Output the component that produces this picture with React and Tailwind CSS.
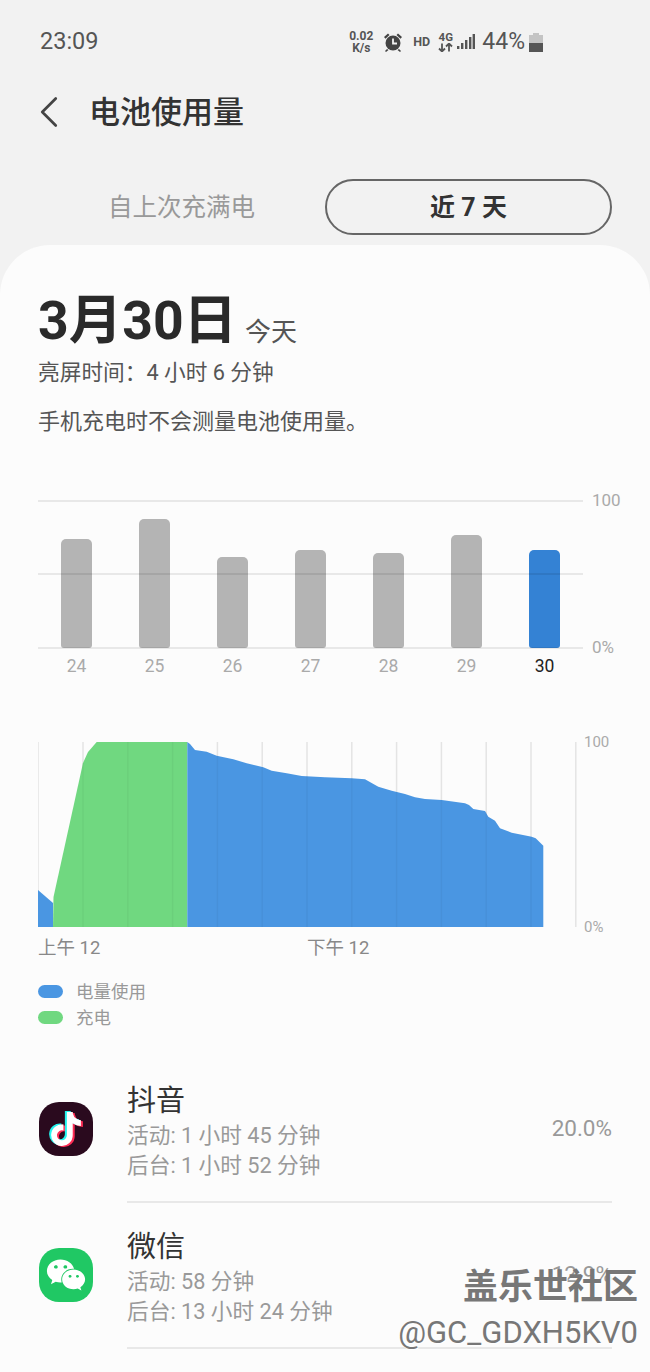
import { ChevronLeft } from "lucide-react";
import { FaTiktok, FaWeixin } from "react-icons/fa6";

const font = { fontFamily: '"Roboto", "Noto Sans CJK SC", sans-serif' };

const bars = [
  { day: 24, height: 109 },
  { day: 25, height: 129 },
  { day: 26, height: 91 },
  { day: 27, height: 98 },
  { day: 28, height: 95 },
  { day: 29, height: 113 },
  { day: 30, height: 98, active: true },
];

const gridX = [38, 83, 127.8, 172.6, 217.4, 262.2, 307, 351.8, 396.6, 441.4, 486.2, 531, 575.8];

// faint hour lines that show through the filled area, with the y where the fill starts
const areaLines = [
  [83, 763],
  [127.8, 742],
  [172.6, 742],
  [217.4, 756],
  [262.2, 767],
  [307, 776],
  [351.8, 778],
  [396.6, 792],
  [441.4, 800],
  [486.2, 812],
  [531, 837],
];

const blueArea =
  "187.3,742 190,744 195,750 206.7,751.7 216.7,755.7 233.3,759.3 246.7,763.3 263.3,767.3 271.7,770.7 286.7,773.3 301.7,776 325,777.3 351.7,778.3 365,779.3 378.3,786.7 391.7,790.7 405,794 415,797.3 425,799 441.7,800 465,803.3 469,805 473.3,809 485,811 488.3,816.7 495,820.7 500,828.3 511.7,832.7 531.7,836.7 535.7,838.3 543.3,845.7 543.3,927 187.3,927";

function StatusBar() {
  return (
    <div className="flex h-[82px] items-center justify-between pl-10 pr-[107px] pt-[2px] text-[#555]">
      <span className="text-[23.5px]">23:09</span>
      <div className="flex items-center">
        <div className="flex w-[24px] flex-col items-center text-[12px] font-bold leading-[12px]">
          <span>0.02</span>
          <span>K/s</span>
        </div>
        <svg className="ml-[10px]" width="20" height="20" viewBox="0 0 20 20" fill="#444">
          <circle cx="10" cy="11" r="7.5" />
          <path d="M1 5 5 1.5 6.5 3 2.5 6.8ZM19 5 15 1.5 13.5 3 17.5 6.8ZM4 17l-2 2 1 1 2.5-2ZM16 17l2 2-1 1-2.5-2Z" />
          <path d="M10 6.5V11.5H14" fill="none" stroke="#f2f2f2" strokeWidth="1.8" />
        </svg>
        <span className="ml-[10px] w-[16px] text-[12.5px] font-bold">HD</span>
        <div className="ml-[9px] flex w-[15px] flex-col items-center">
          <span className="text-[11.5px] font-bold leading-[11px]">4G</span>
          <svg width="15" height="9" viewBox="0 0 15 9" fill="none" stroke="#555" strokeWidth="1.8">
            <path d="M4 0.5V8M1 5.5 4 8.5 7 5.5M11 8.5V1M8 3.5 11 0.5 14 3.5" />
          </svg>
        </div>
        <svg className="ml-[4px]" width="18" height="18" viewBox="0 0 18 18" fill="#555">
          <rect x="0" y="13" width="2.4" height="3" />
          <rect x="4" y="10" width="2.4" height="6" />
          <rect x="8" y="7" width="2.4" height="9" />
          <rect x="12" y="4" width="2.4" height="12" />
          <rect x="15.6" y="1" width="2.4" height="15" />
        </svg>
        <span className="ml-[7px] text-[23px]">44%</span>
        <svg className="ml-[4px]" width="14" height="20" viewBox="0 0 14 20">
          <path d="M4 1h6v2h4v17H0V3h4Z" fill="#c4c4c4" />
          <rect x="0" y="11" width="14" height="9" fill="#555" />
        </svg>
      </div>
    </div>
  );
}

function BarChart() {
  return (
    <div className="mt-[63px]">
      <div className="relative h-[148px]">
        <div className="flex h-full items-end pl-[23px]">
          {bars.map((bar) => (
            <div key={bar.day} className="w-[78px]">
              <div
                className={`w-[31px] rounded-t-[5px] rounded-b-[3px] ${bar.active ? "bg-[#3482d4]" : "bg-[#b4b4b4]"}`}
                style={{ height: bar.height }}
              />
            </div>
          ))}
        </div>
        <div className="absolute inset-0 flex flex-col justify-between">
          <div className="flex h-px items-center">
            <div className="h-[2px] w-[545px] shrink-0 bg-black/[0.08]" />
            <span className="ml-[9px] whitespace-nowrap text-[17px] text-[#aaa]">100</span>
          </div>
          <div className="h-[2px] w-[545px] bg-black/[0.08]" />
          <div className="flex h-px items-center">
            <div className="h-[2px] w-[545px] shrink-0 bg-black/[0.08]" />
            <span className="ml-[9px] whitespace-nowrap text-[17px] text-[#aaa]">0%</span>
          </div>
        </div>
      </div>
      <div className="mt-[6px] flex pl-[23px]">
        {bars.map((bar) => (
          <div
            key={bar.day}
            className={`w-[78px] text-[17.5px] leading-[24px] ${bar.active ? "text-[#222]" : "text-[#aaa]"}`}
          >
            <span className="block w-[31px] text-center">{bar.day}</span>
          </div>
        ))}
      </div>
    </div>
  );
}

function AreaChart() {
  return (
    <div className="mt-[64px]">
      <div className="flex h-[185px]">
        <svg width="540" height="186" viewBox="38 742 540 186" className="shrink-0">
          {gridX.map((x) => (
            <line key={x} x1={x} x2={x} y1="742" y2="927" stroke="#e4e4e4" strokeWidth="1.5" />
          ))}
          <polygon points="38,890 53,903 53,927 38,927" fill="#4a96e2" />
          <polygon points="53,927 53.5,897 83,763 88,752 96.7,742 187.3,742 187.3,927" fill="#70d880" />
          <polygon points={blueArea} fill="#4a96e2" />
          {areaLines.map(([x, top]) => (
            <line
              key={x}
              x1={x}
              x2={x}
              y1={top}
              y2="927"
              stroke="#000"
              strokeOpacity="0.04"
              strokeWidth="1.5"
            />
          ))}
        </svg>
        <div className="ml-[6px] flex flex-col justify-between text-[15px] leading-none text-[#aaa]">
          <span className="-mt-[7px]">100</span>
          <span className="-mb-[8px]">0%</span>
        </div>
      </div>
      <div className="mt-[8px] flex text-[18.5px] text-[#888]">
        <span className="w-[269px]">上午 12</span>
        <span>下午 12</span>
      </div>
      <div className="mt-[17px] flex flex-col gap-[2px] text-[17.5px] text-[#999]">
        <div className="flex h-[24px] items-center">
          <span className="h-[13px] w-[25px] rounded-full bg-[#4a96e2]" />
          <span className="ml-[13px]">电量使用</span>
        </div>
        <div className="flex h-[24px] items-center">
          <span className="h-[13px] w-[25px] rounded-full bg-[#70d880]" />
          <span className="ml-[13px]">充电</span>
        </div>
      </div>
    </div>
  );
}

function AppRow({ icon, name, active, background, percent }) {
  return (
    <div className="flex h-[146px]">
      <div className="flex w-[89px] items-center pb-[2px] pl-px">{icon}</div>
      <div className="flex flex-1 items-center justify-between border-b-2 border-[#e8e8e8]">
        <div className="flex flex-col pt-[4px]">
          <span className="text-[29px] leading-[40px] text-[#333]">{name}</span>
          <span className="text-[21.7px] leading-[30px] text-[#999]">{active}</span>
          <span className="text-[21.7px] leading-[30px] text-[#999]">{background}</span>
        </div>
        <span className="text-[22.5px] text-[#999]">{percent}</span>
      </div>
    </div>
  );
}

export default function App() {
  return (
    <div className="relative h-[1372px] overflow-hidden bg-[#f2f2f2]" style={font}>
      <StatusBar />
      <div className="flex h-[60px] items-center pl-[22px]">
        <ChevronLeft className="h-[54px] w-[54px] text-[#444]" strokeWidth={1.2} />
        <h1 className="ml-[13px] pt-[3px] text-[31px] font-medium text-[#333]">电池使用量</h1>
      </div>
      <div className="mt-[37px] flex h-[56px] items-center px-[38px]">
        <span className="w-[287px] pl-[70px] pt-[3px] text-[24.5px] text-[#999]">自上次充满电</span>
        <div className="flex h-[56px] w-[287px] items-center justify-center rounded-full border-2 border-[#666] pt-px text-[25px] font-bold text-[#333]">
          近 7 天
        </div>
      </div>
      <main className="mt-[10px] h-[1200px] rounded-t-[50px] bg-[#fcfcfc] px-[38px] pt-[40px]">
        <div className="flex items-end">
          <span className="text-[53.5px] font-bold leading-[72px] text-[#2a2a2a]">3月30日</span>
          <span className="mb-[5px] ml-[8px] text-[26px] text-[#555]">今天</span>
        </div>
        <p className="mt-[1px] text-[21.7px] leading-[30px] text-[#555]">亮屏时间：4 小时 6 分钟</p>
        <p className="mt-[19px] text-[22px] leading-[30px] text-[#555]">手机充电时不会测量电池使用量。</p>
        <BarChart />
        <AreaChart />
        <div className="mt-[27px]">
          <AppRow
            name="抖音"
            active="活动: 1 小时 45 分钟"
            background="后台: 1 小时 52 分钟"
            percent="20.0%"
            icon={
              <div className="flex h-[54px] w-[54px] items-center justify-center rounded-[20px] bg-[#2a0a1e] text-[34px] text-white">
                <FaTiktok className="[filter:drop-shadow(-2px_-1px_0_#25f4ee)_drop-shadow(2px_1px_0_#fe2c55)]" />
              </div>
            }
          />
          <AppRow
            name="微信"
            active="活动: 58 分钟"
            background="后台: 13 小时 24 分钟"
            percent="12.9%"
            icon={
              <div className="flex h-[54px] w-[54px] items-center justify-center rounded-[20px] bg-[#20c864] text-[40px] text-white">
                <FaWeixin />
              </div>
            }
          />
        </div>
      </main>
      <div className="absolute right-[12px] top-[1266px] flex flex-col items-end text-[#777] [text-shadow:1px_1px_0_#fff]">
        <span className="text-[35px] font-bold leading-[44px]">盖乐世社区</span>
        <span className="mt-[3px] text-[31px] leading-[40px]">@GC_GDXH5KV0</span>
      </div>
    </div>
  );
}
